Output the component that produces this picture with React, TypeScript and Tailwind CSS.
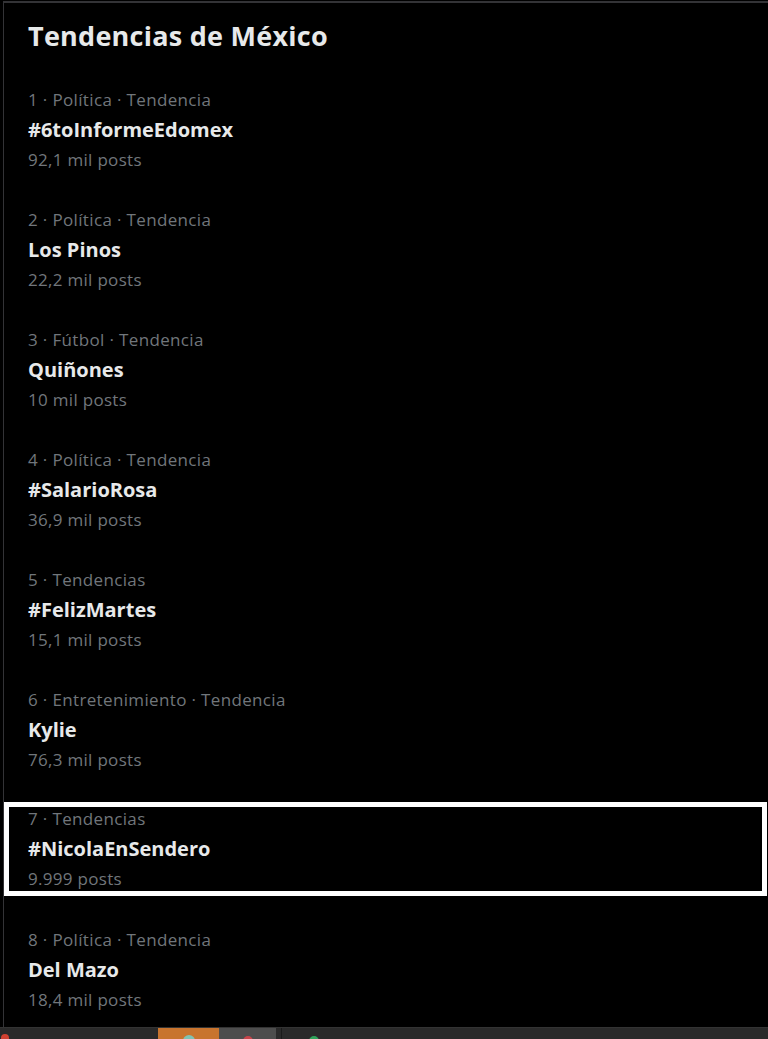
import React from "react";

type Trend = { meta: string; name: string; count: string; highlight?: boolean };

const trends: Trend[] = [
  { meta: "1 · Política · Tendencia", name: "#6toInformeEdomex", count: "92,1 mil posts" },
  { meta: "2 · Política · Tendencia", name: "Los Pinos", count: "22,2 mil posts" },
  { meta: "3 · Fútbol · Tendencia", name: "Quiñones", count: "10 mil posts" },
  { meta: "4 · Política · Tendencia", name: "#SalarioRosa", count: "36,9 mil posts" },
  { meta: "5 · Tendencias", name: "#FelizMartes", count: "15,1 mil posts" },
  { meta: "6 · Entretenimiento · Tendencia", name: "Kylie", count: "76,3 mil posts" },
  { meta: "7 · Tendencias", name: "#NicolaEnSendero", count: "9.999 posts", highlight: true },
  { meta: "8 · Política · Tendencia", name: "Del Mazo", count: "18,4 mil posts" },
];

function TrendBody({ t }: { t: Trend }) {
  return (
    <div className="flex flex-col gap-[6px]">
      <div className="leading-6 text-[17px] tracking-[0.35px] text-[#71767b]">{t.meta}</div>
      <div className="leading-6 text-[20px] font-bold text-[#e7e9ea]">{t.name}</div>
      <div className="leading-6 text-[17px] tracking-[0.3px] text-[#71767b]">{t.count}</div>
    </div>
  );
}

export default function App() {
  return (
    <div
      className="w-[768px] h-[1039px] bg-black flex flex-col overflow-hidden"
      style={{ fontFamily: '"Open Sans", "Noto Sans", Arial, sans-serif' }}
    >
      <div className="flex-1 min-h-0 pt-[1px] pl-[3px]">
        <div className="h-full border-t-2 border-l border-[#333336] flex flex-col">
          <h1 className="mt-[17px] pl-6 leading-8 text-[27px] font-bold text-[#e7e9ea] tracking-[0.25px]">
            Tendencias de México
          </h1>
          <div className="flex flex-col">
            {trends.map((t, i) => {
              if (t.highlight) {
                return (
                  <div
                    key={i}
                    className="mt-[30px] mr-[1px] border-[5px] border-white pl-[19px]"
                  >
                    <TrendBody t={t} />
                  </div>
                );
              }
              const prevHighlight = i > 0 && trends[i - 1].highlight;
              return (
                <div key={i} className={`${prevHighlight ? "mt-[32px]" : "mt-[36px]"} pl-6`}>
                  <TrendBody t={t} />
                </div>
              );
            })}
          </div>
        </div>
      </div>
      <div className="h-3 bg-[#2a2a2a] border-t border-[#333] flex items-start shrink-0">
        <div className="w-[158px] h-full relative">
          <span className="absolute left-[1px] top-[6px] w-[8px] h-[8px] rounded-full bg-[#d04030]" />
        </div>
        <div className="w-[61px] h-full bg-[#c8742e] relative">
          <span className="absolute left-[25px] top-[7px] w-[12px] h-[12px] rounded-full bg-[#7fc4b5]" />
        </div>
        <div className="w-[57px] h-full bg-[#4d4d4d] relative">
          <span className="absolute left-[24px] top-[8px] w-[10px] h-[10px] rounded-full bg-[#c8444a]" />
        </div>
        <div className="w-[5px] h-full" />
        <div className="w-[1px] h-full bg-[#1a1a1a]" />
        <div className="flex-1 h-full relative">
          <span className="absolute left-[27px] top-[8px] w-[10px] h-[10px] rounded-full bg-[#2fa35a]" />
        </div>
      </div>
    </div>
  );
}
